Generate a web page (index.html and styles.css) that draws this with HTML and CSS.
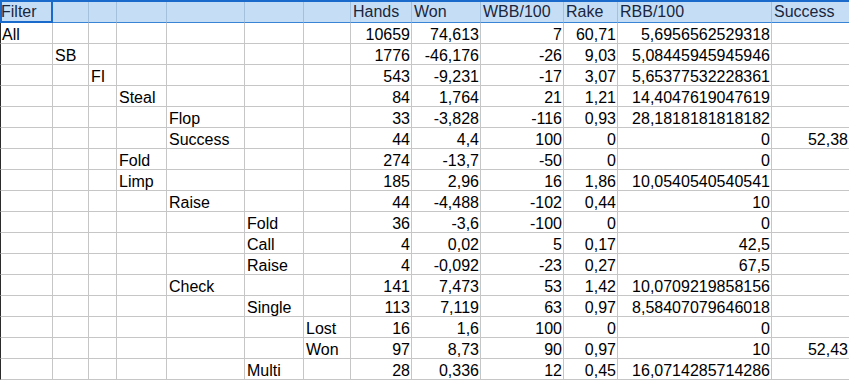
FILE: index.html
```html
<!DOCTYPE html>
<html>
<head>
<meta charset="utf-8">
<link rel="stylesheet" href="styles.css">
</head>
<body>
<div class="sheet">
  <div class="row head">
    <div class="c sel">Filter</div><div class="c"></div><div class="c"></div><div class="c"></div><div class="c"></div><div class="c"></div><div class="c"></div>
    <div class="c">Hands</div><div class="c">Won</div><div class="c">WBB/100</div><div class="c">Rake</div><div class="c">RBB/100</div><div class="c">Success</div>
  </div>
  <div class="row"><div class="c">All</div><div class="c"></div><div class="c"></div><div class="c"></div><div class="c"></div><div class="c"></div><div class="c"></div><div class="c n">10659</div><div class="c n">74,613</div><div class="c n">7</div><div class="c n">60,71</div><div class="c n">5,6956562529318</div><div class="c n"></div></div>
  <div class="row"><div class="c"></div><div class="c">SB</div><div class="c"></div><div class="c"></div><div class="c"></div><div class="c"></div><div class="c"></div><div class="c n">1776</div><div class="c n">-46,176</div><div class="c n">-26</div><div class="c n">9,03</div><div class="c n">5,08445945945946</div><div class="c n"></div></div>
  <div class="row"><div class="c"></div><div class="c"></div><div class="c">FI</div><div class="c"></div><div class="c"></div><div class="c"></div><div class="c"></div><div class="c n">543</div><div class="c n">-9,231</div><div class="c n">-17</div><div class="c n">3,07</div><div class="c n">5,65377532228361</div><div class="c n"></div></div>
  <div class="row"><div class="c"></div><div class="c"></div><div class="c"></div><div class="c">Steal</div><div class="c"></div><div class="c"></div><div class="c"></div><div class="c n">84</div><div class="c n">1,764</div><div class="c n">21</div><div class="c n">1,21</div><div class="c n">14,4047619047619</div><div class="c n"></div></div>
  <div class="row"><div class="c"></div><div class="c"></div><div class="c"></div><div class="c"></div><div class="c">Flop</div><div class="c"></div><div class="c"></div><div class="c n">33</div><div class="c n">-3,828</div><div class="c n">-116</div><div class="c n">0,93</div><div class="c n">28,1818181818182</div><div class="c n"></div></div>
  <div class="row"><div class="c"></div><div class="c"></div><div class="c"></div><div class="c"></div><div class="c">Success</div><div class="c"></div><div class="c"></div><div class="c n">44</div><div class="c n">4,4</div><div class="c n">100</div><div class="c n">0</div><div class="c n">0</div><div class="c n">52,38</div></div>
  <div class="row"><div class="c"></div><div class="c"></div><div class="c"></div><div class="c">Fold</div><div class="c"></div><div class="c"></div><div class="c"></div><div class="c n">274</div><div class="c n">-13,7</div><div class="c n">-50</div><div class="c n">0</div><div class="c n">0</div><div class="c n"></div></div>
  <div class="row"><div class="c"></div><div class="c"></div><div class="c"></div><div class="c">Limp</div><div class="c"></div><div class="c"></div><div class="c"></div><div class="c n">185</div><div class="c n">2,96</div><div class="c n">16</div><div class="c n">1,86</div><div class="c n">10,0540540540541</div><div class="c n"></div></div>
  <div class="row"><div class="c"></div><div class="c"></div><div class="c"></div><div class="c"></div><div class="c">Raise</div><div class="c"></div><div class="c"></div><div class="c n">44</div><div class="c n">-4,488</div><div class="c n">-102</div><div class="c n">0,44</div><div class="c n">10</div><div class="c n"></div></div>
  <div class="row"><div class="c"></div><div class="c"></div><div class="c"></div><div class="c"></div><div class="c"></div><div class="c">Fold</div><div class="c"></div><div class="c n">36</div><div class="c n">-3,6</div><div class="c n">-100</div><div class="c n">0</div><div class="c n">0</div><div class="c n"></div></div>
  <div class="row"><div class="c"></div><div class="c"></div><div class="c"></div><div class="c"></div><div class="c"></div><div class="c">Call</div><div class="c"></div><div class="c n">4</div><div class="c n">0,02</div><div class="c n">5</div><div class="c n">0,17</div><div class="c n">42,5</div><div class="c n"></div></div>
  <div class="row"><div class="c"></div><div class="c"></div><div class="c"></div><div class="c"></div><div class="c"></div><div class="c">Raise</div><div class="c"></div><div class="c n">4</div><div class="c n">-0,092</div><div class="c n">-23</div><div class="c n">0,27</div><div class="c n">67,5</div><div class="c n"></div></div>
  <div class="row"><div class="c"></div><div class="c"></div><div class="c"></div><div class="c"></div><div class="c">Check</div><div class="c"></div><div class="c"></div><div class="c n">141</div><div class="c n">7,473</div><div class="c n">53</div><div class="c n">1,42</div><div class="c n">10,0709219858156</div><div class="c n"></div></div>
  <div class="row"><div class="c"></div><div class="c"></div><div class="c"></div><div class="c"></div><div class="c"></div><div class="c">Single</div><div class="c"></div><div class="c n">113</div><div class="c n">7,119</div><div class="c n">63</div><div class="c n">0,97</div><div class="c n">8,58407079646018</div><div class="c n"></div></div>
  <div class="row"><div class="c"></div><div class="c"></div><div class="c"></div><div class="c"></div><div class="c"></div><div class="c"></div><div class="c">Lost</div><div class="c n">16</div><div class="c n">1,6</div><div class="c n">100</div><div class="c n">0</div><div class="c n">0</div><div class="c n"></div></div>
  <div class="row"><div class="c"></div><div class="c"></div><div class="c"></div><div class="c"></div><div class="c"></div><div class="c"></div><div class="c">Won</div><div class="c n">97</div><div class="c n">8,73</div><div class="c n">90</div><div class="c n">0,97</div><div class="c n">10</div><div class="c n">52,43</div></div>
  <div class="row"><div class="c"></div><div class="c"></div><div class="c"></div><div class="c"></div><div class="c"></div><div class="c">Multi</div><div class="c"></div><div class="c n">28</div><div class="c n">0,336</div><div class="c n">12</div><div class="c n">0,45</div><div class="c n">16,0714285714286</div><div class="c n"></div></div>
</div>
</body>
</html>
```

FILE: styles.css
```css
html, body {
  margin: 0;
  padding: 0;
  background: #ffffff;
}
body {
  font-family: "Liberation Sans", Arial, sans-serif;
  font-size: 16px;
  color: #000000;
  overflow: hidden;
}
.sheet {
  width: 849px;
  height: 380px;
  overflow: hidden;
}
.row {
  display: grid;
  grid-template-columns: 53px 36px 28px 50px 78px 59px 47px 61px 69px 83px 54px 154px 78px;
  height: 21px;
}
.c {
  box-sizing: border-box;
  height: 21px;
  border-right: 1px solid #c6c6c6;
  border-bottom: 1px solid #c6c6c6;
  padding: 3px 1px 0 2px;
  line-height: 17px;
  white-space: nowrap;
  overflow: visible;
}
.row > .c:first-child {
  border-left: 1px solid #2b2b2b;
  padding-left: 1px;
}
.n {
  text-align: right;
}
.head {
  height: 23px;
  background: #c5def5;
  border-top: 2px solid #1a6acb;
  box-sizing: border-box;
  height: 23px;
}
.head .c {
  height: 21px;
  border-right: 1px solid #a3c0dc;
  border-bottom: 1px solid #3a84d6;
  padding-top: 1px;
  color: #1a2640;
}
.head > .c:first-child {
  border-left: none;
}
.head .sel {
  box-shadow: inset 2px 0 0 #1a6acb, inset -2px 0 0 #1a6acb, inset 0 -2px 0 #1a6acb;
  border-right: none;
  border-bottom: none;
  padding-left: 3px;
}
```
